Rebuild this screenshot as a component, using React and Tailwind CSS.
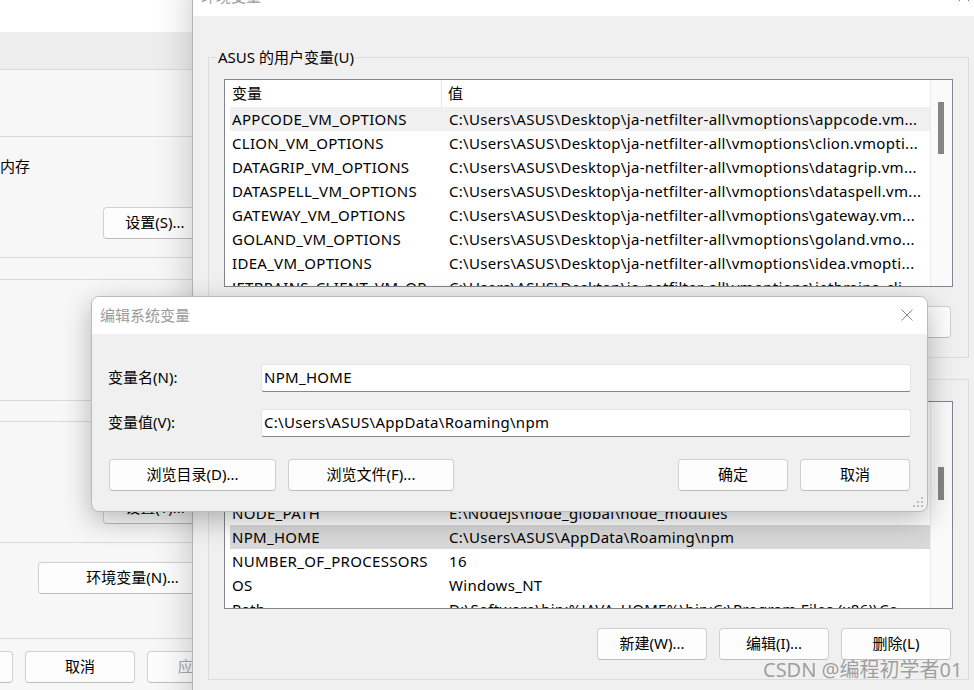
import React from 'react'

const userVars = [
  ['APPCODE_VM_OPTIONS', 'C:\\Users\\ASUS\\Desktop\\ja-netfilter-all\\vmoptions\\appcode.vm...'],
  ['CLION_VM_OPTIONS', 'C:\\Users\\ASUS\\Desktop\\ja-netfilter-all\\vmoptions\\clion.vmopti...'],
  ['DATAGRIP_VM_OPTIONS', 'C:\\Users\\ASUS\\Desktop\\ja-netfilter-all\\vmoptions\\datagrip.vm...'],
  ['DATASPELL_VM_OPTIONS', 'C:\\Users\\ASUS\\Desktop\\ja-netfilter-all\\vmoptions\\dataspell.vm...'],
  ['GATEWAY_VM_OPTIONS', 'C:\\Users\\ASUS\\Desktop\\ja-netfilter-all\\vmoptions\\gateway.vm...'],
  ['GOLAND_VM_OPTIONS', 'C:\\Users\\ASUS\\Desktop\\ja-netfilter-all\\vmoptions\\goland.vmo...'],
  ['IDEA_VM_OPTIONS', 'C:\\Users\\ASUS\\Desktop\\ja-netfilter-all\\vmoptions\\idea.vmopti...'],
  ['JETBRAINS_CLIENT_VM_OP...', 'C:\\Users\\ASUS\\Desktop\\ja-netfilter-all\\vmoptions\\jetbrains_cli...'],
  ['JETBRAINSCLIENT_VM_OPT...', 'C:\\Users\\ASUS\\Desktop\\ja-netfilter-all\\vmoptions\\jetbrainscl...'],
]

const sysVars = [
  ['DriverData', 'C:\\Windows\\System32\\Drivers\\DriverData'],
  ['JAVA_HOME', 'D:\\Software\\Java\\jdk1.8.0_202'],
  ['MAVEN_HOME', 'D:\\Software\\apache-maven-3.8.6'],
  ['NODE_PATH', 'E:\\Nodejs\\node_global\\node_modules'],
  ['NPM_HOME', 'C:\\Users\\ASUS\\AppData\\Roaming\\npm'],
  ['NUMBER_OF_PROCESSORS', '16'],
  ['OS', 'Windows_NT'],
  ['Path', 'D:\\Software\\bin;%JAVA_HOME%\\bin;C:\\Program Files (x86)\\Co...'],
  ['PATHEXT', '.COM;.EXE;.BAT;.CMD;.VBS;.VBE;.JS;.JSE;.WSF;.WSH;.MSC'],
]

function Btn({ children, className = '', disabled }) {
  return (
    <div
      className={`flex h-[32px] shrink-0 items-center justify-center rounded-[4px] border border-[#d0d0d0] border-b-[#bdbdbd] bg-[#fdfdfd] pb-[1px] text-[15px] ${disabled ? 'text-[#a8a8a8]' : 'text-black'} ${className}`}
    >
      {children}
    </div>
  )
}

function VarList({ rows, selected, hover, thumbTop, thumbHeight }) {
  return (
    <div className="flex h-[208px] w-[729px] border border-[#82848a] bg-white">
      <div className="min-w-0 flex-1 overflow-hidden">
        <div className="flex h-[27px] items-stretch leading-[27px]">
          <div className="w-[217px] shrink-0 border-r border-[#e5e5e5] pl-[7px]">变量</div>
          <div className="pl-[6px]">值</div>
        </div>
        {rows.map(([name, value], i) => (
          <div
            key={name}
            className={`ml-[5px] flex h-[24px] whitespace-nowrap leading-[24px] tracking-[0.3px] ${
              i === selected ? 'bg-[#d9d9d9]' : i === hover ? 'bg-[#f0f0f0]' : ''
            }`}
          >
            <div className="w-[212px] shrink-0 overflow-hidden pl-[2px]">{name}</div>
            <div className="overflow-hidden pl-[7px]">{value}</div>
          </div>
        ))}
      </div>
      <div className="relative w-[22px] shrink-0 border-l border-[#ececec] bg-[#fafafa]">
        <div className="absolute left-[7px] w-[6px] bg-[#858585]" style={{ top: thumbTop, height: thumbHeight }} />
      </div>
    </div>
  )
}

function Group({ label, children }) {
  return (
    <div className="relative w-[761px] border border-[#dcdcdc] px-[15px] pb-[19px] pt-[21px]">
      <span className="absolute left-[8px] top-[-11px] bg-[#f0f0f0] px-[1px] leading-[20px]">{label}</span>
      {children}
      <div className="mt-[19px] flex justify-end gap-[12px] pr-[2px]">
        <Btn className="w-[110px]">新建(W)...</Btn>
        <Btn className="w-[110px]">编辑(I)...</Btn>
        <Btn className="w-[110px]">删除(L)</Btn>
      </div>
    </div>
  )
}

function CloseIcon({ className }) {
  return (
    <svg className={className} viewBox="0 0 12 12" fill="none" stroke="currentColor" strokeWidth="1">
      <path d="M0.5 0.5l11 11M11.5 0.5l-11 11" />
    </svg>
  )
}

export default function App() {
  return (
    <div className="relative h-[690px] w-[974px] overflow-hidden bg-[#f0f0f0] font-['Noto_Sans','Noto_Sans_CJK_SC',sans-serif] text-[15px] text-black">
      {/* 系统属性 (back window) */}
      <div className="absolute left-0 top-0 h-[690px] w-[192px] overflow-hidden bg-[#f7f7f7]">
        <div className="h-[32px] bg-white" />
        <div className="h-[38px] border-b border-[#dadada] bg-[#eeeeee]" />
        <div className="h-[67px] border-b border-[#dadada]" />
        <div className="h-[121px] border-b border-[#dadada] pt-[20px]">
          <div className="-ml-[60px] whitespace-nowrap leading-[18px]">以及虚拟内存</div>
          <div className="mt-[32px] pl-[103px]">
            <Btn className="w-[104px]">设置(S)...</Btn>
          </div>
        </div>
        <div className="h-[22px] border-b border-[#dadada]" />
        <div className="h-[121px] border-b border-[#dadada]" />
        <div className="h-[21px] border-b border-[#dadada]" />
        <div className="h-[121px] border-b border-[#dadada] pt-[70px] pl-[103px]">
          <Btn className="w-[104px]">设置(T)...</Btn>
        </div>
        <div className="h-[96px] border-b border-[#dadada] pt-[19px] pl-[38px]">
          <Btn className="w-[189px]">环境变量(N)...</Btn>
        </div>
        <div className="flex gap-[12px] pl-[25px] pt-[12px]">
          <Btn className="-ml-[122px] w-[110px]">确定</Btn>
          <Btn className="w-[110px]">取消</Btn>
          <Btn className="w-[110px]" disabled>
            应用(A)
          </Btn>
        </div>
      </div>

      {/* 环境变量 window */}
      <div className="absolute left-[192px] top-[-24px] h-[740px] w-[800px] border-l border-[#b4b4b4] bg-[#f0f0f0] shadow-[0_0_36px_rgba(0,0,0,0.22)]">
        <div className="relative flex h-[40px] items-center bg-white pl-[8px] text-[#9a9a9a]">
          环境变量
          <CloseIcon className="absolute left-[765px] top-[14px] h-[12px] w-[12px] text-[#888]" />
        </div>
        <div className="ml-[15px] mt-[41px]">
          <Group label="ASUS 的用户变量(U)">
            <VarList rows={userVars} hover={0} thumbTop={22} thumbHeight={52} />
          </Group>
          <div className="mt-[21px]">
            <Group label="系统变量(S)">
              <VarList rows={sysVars} selected={4} thumbTop={65} thumbHeight={33} />
            </Group>
          </div>
        </div>
      </div>

      {/* 编辑系统变量 dialog */}
      <div className="absolute left-[91px] top-[296px] h-[216px] w-[837px] overflow-hidden rounded-[8px] border border-[#b9b9b9] bg-[#f0f0f0] shadow-[0_8px_28px_rgba(0,0,0,0.28)]">
        <div className="relative flex h-[37px] items-center bg-white pb-[1px] pl-[8px] text-[#9a9a9a]">
          编辑系统变量
          <CloseIcon className="absolute right-[14px] top-[12px] h-[12px] w-[12px] text-[#8a8a8a]" />
        </div>
        <div className="px-[16px] pt-[30px]">
          <div className="flex h-[28px] items-center">
            <div className="w-[153px] shrink-0 pb-[2px]">变量名(N):</div>
            <div className="flex h-[28px] flex-1 items-center rounded-[3px] border border-[#e4e4e4] border-b-[#878787] bg-white pb-[2px] pl-[2px] tracking-[0.3px]">
              NPM_HOME
            </div>
          </div>
          <div className="mt-[17px] flex h-[28px] items-center">
            <div className="w-[153px] shrink-0 pb-[2px]">变量值(V):</div>
            <div className="flex h-[28px] flex-1 items-center rounded-[3px] border border-[#e4e4e4] border-b-[#878787] bg-white pb-[2px] pl-[2px] tracking-[0.3px]">
              C:\Users\ASUS\AppData\Roaming\npm
            </div>
          </div>
          <div className="mt-[22px] flex gap-[12px] pl-[1px] pr-[1px]">
            <Btn className="w-[167px]">浏览目录(D)...</Btn>
            <Btn className="w-[166px]">浏览文件(F)...</Btn>
            <Btn className="ml-auto w-[110px]">确定</Btn>
            <Btn className="w-[110px]">取消</Btn>
          </div>
        </div>
        <svg className="absolute bottom-[2px] right-[2px] h-[12px] w-[12px] text-[#bdbdbd]" viewBox="0 0 12 12" fill="currentColor">
          <rect x="8" y="0" width="2" height="2" />
          <rect x="4" y="4" width="2" height="2" />
          <rect x="8" y="4" width="2" height="2" />
          <rect x="0" y="8" width="2" height="2" />
          <rect x="4" y="8" width="2" height="2" />
          <rect x="8" y="8" width="2" height="2" />
        </svg>
      </div>

      {/* watermark */}
      <div className="absolute left-[763px] top-[656px] text-[20px] leading-[28px] text-[#7a7a7a]/70">CSDN @编程初学者01</div>
    </div>
  )
}
